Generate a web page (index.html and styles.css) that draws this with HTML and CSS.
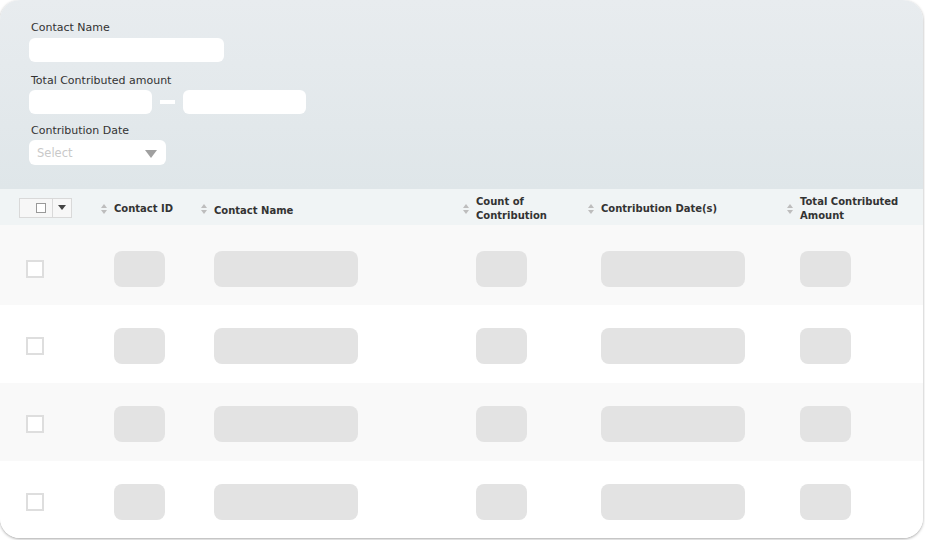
FILE: index.html
```html
<!DOCTYPE html>
<html>
<head>
<meta charset="utf-8">
<link rel="stylesheet" href="styles.css">
</head>
<body>
<div class="card">
  <div class="filters">
    <div class="label first">Contact Name</div>
    <div class="input wide"></div>
    <div class="label">Total Contributed amount</div>
    <div class="range">
      <div class="input half"></div>
      <div class="dash"></div>
      <div class="input half"></div>
    </div>
    <div class="label third">Contribution Date</div>
    <div class="select">
      <span class="placeholder">Select</span>
      <span class="caret"></span>
    </div>
  </div>

  <div class="grid head">
    <div class="cell first-col">
      <div class="bulk">
        <div class="bulk-box"><span class="mini-check"></span></div>
        <div class="bulk-arrow"><span class="dark-caret"></span></div>
      </div>
    </div>
    <div class="cell"><span class="sort"></span><span class="htext">Contact ID</span></div>
    <div class="cell"><span class="sort"></span><span class="htext low">Contact Name</span></div>
    <div class="cell"><span class="sort"></span><span class="htext">Count of<br>Contribution</span></div>
    <div class="cell"><span class="sort"></span><span class="htext">Contribution Date(s)</span></div>
    <div class="cell"><span class="sort"></span><span class="htext">Total Contributed<br>Amount</span></div>
  </div>

  <div class="grid row shade r1">
    <div class="cell first-col"><span class="check"></span></div>
    <div class="cell"><span class="sk short"></span></div>
    <div class="cell"><span class="sk long"></span></div>
    <div class="cell"><span class="sk short"></span></div>
    <div class="cell"><span class="sk long"></span></div>
    <div class="cell"><span class="sk short"></span></div>
  </div>
  <div class="grid row">
    <div class="cell first-col"><span class="check"></span></div>
    <div class="cell"><span class="sk short"></span></div>
    <div class="cell"><span class="sk long"></span></div>
    <div class="cell"><span class="sk short"></span></div>
    <div class="cell"><span class="sk long"></span></div>
    <div class="cell"><span class="sk short"></span></div>
  </div>
  <div class="grid row shade">
    <div class="cell first-col"><span class="check"></span></div>
    <div class="cell"><span class="sk short"></span></div>
    <div class="cell"><span class="sk long"></span></div>
    <div class="cell"><span class="sk short"></span></div>
    <div class="cell"><span class="sk long"></span></div>
    <div class="cell"><span class="sk short"></span></div>
  </div>
  <div class="grid row">
    <div class="cell first-col"><span class="check"></span></div>
    <div class="cell"><span class="sk short"></span></div>
    <div class="cell"><span class="sk long"></span></div>
    <div class="cell"><span class="sk short"></span></div>
    <div class="cell"><span class="sk long"></span></div>
    <div class="cell"><span class="sk short"></span></div>
  </div>
</div>
</body>
</html>
```
FILE: styles.css
```css
html, body {
  margin: 0;
  padding: 0;
  background: #ffffff;
}
body {
  font-family: "DejaVu Sans", "Liberation Sans", sans-serif;
  color: #333333;
  width: 925px;
  height: 540px;
  overflow: hidden;
}
.card {
  width: 923px;
  height: 538px;
  border-radius: 20px;
  overflow: hidden;
  background: #ffffff;
  box-shadow: 0 1px 3px rgba(0, 0, 0, 0.35);
}
.filters {
  background: linear-gradient(180deg, #e8ecef 0%, #dfe6e9 100%);
  padding: 21px 0 24px 29px;
}
.label {
  font-size: 11px;
  line-height: 14px;
  height: 14px;
  padding-left: 2px;
  margin-top: 12px;
  margin-bottom: 2px;
  color: #333;
}
.label.first {
  margin-top: 0;
  margin-bottom: 3px;
}
.label.third {
  margin-top: 10px;
}
.input {
  background: #ffffff;
  border-radius: 6px;
  height: 24px;
}
.input.wide { width: 195px; }
.range {
  display: flex;
  align-items: center;
}
.input.half { width: 123px; }
.dash {
  width: 15px;
  height: 4px;
  background: #ffffff;
  margin: 0 8px;
}
.select {
  width: 137px;
  height: 25px;
  background: #ffffff;
  border-radius: 6px;
  display: flex;
  align-items: center;
  justify-content: space-between;
  padding: 0 9px 0 8px;
  box-sizing: border-box;
}
.placeholder {
  font-size: 11.5px;
  color: #c9c9c9;
}
.caret {
  width: 0;
  height: 0;
  border-left: 6px solid transparent;
  border-right: 6px solid transparent;
  border-top: 8px solid #a0a0a0;
  margin-top: 3px;
}
.grid {
  display: grid;
  grid-template-columns: 101px 100px 262px 125px 199px 1fr;
}
.head {
  background: #f0f4f5;
  height: 36px;
}
.head .cell {
  display: flex;
  align-items: center;
  padding-top: 3px;
  box-sizing: border-box;
}
.head .first-col {
  padding-left: 19px;
  padding-top: 1px;
}
.bulk {
  display: flex;
  height: 20px;
  border: 1px solid #d9d9d9;
  box-sizing: border-box;
  background: #f7f7f7;
}
.bulk-box {
  width: 33px;
  display: flex;
  align-items: center;
  justify-content: flex-end;
  padding-right: 6px;
  box-sizing: border-box;
  border-right: 1px solid #d9d9d9;
}
.mini-check {
  width: 8px;
  height: 8px;
  border: 1px solid #999;
  background: #fff;
}
.bulk-arrow {
  width: 18px;
  display: flex;
  align-items: center;
  justify-content: center;
}
.dark-caret {
  width: 0;
  height: 0;
  border-left: 4px solid transparent;
  border-right: 4px solid transparent;
  border-top: 5px solid #444;
}
.sort {
  width: 7px;
  height: 10px;
  margin-right: 6px;
  flex: none;
  position: relative;
}
.sort::before, .sort::after {
  content: "";
  position: absolute;
  left: 0;
  width: 0;
  height: 0;
  border-left: 3.5px solid transparent;
  border-right: 3.5px solid transparent;
}
.sort::before {
  top: 0;
  border-bottom: 4px solid #bdbdbd;
}
.sort::after {
  bottom: 0;
  border-top: 4px solid #bdbdbd;
}
.htext {
  font-size: 10px;
  font-weight: bold;
  line-height: 14px;
  color: #333;
}
.htext.low {
  margin-top: 5px;
}
.row {
  height: 78px;
  box-sizing: border-box;
  padding-top: 23px;
  background: #ffffff;
}
.row.r1 {
  height: 80px;
  padding-top: 26px;
}
.row.shade {
  background: #f9f9f9;
}
.row .cell {
  padding-left: 13px;
  display: flex;
  align-items: flex-start;
}
.row .first-col {
  padding-left: 26px;
}
.check {
  width: 18px;
  height: 18px;
  box-sizing: border-box;
  border: 2px solid #dedede;
  background: #fff;
  margin-top: 9px;
}
.sk {
  display: block;
  height: 36px;
  border-radius: 8px;
  background: #e3e3e3;
}
.sk.short { width: 51px; }
.sk.long { width: 144px; }
```
